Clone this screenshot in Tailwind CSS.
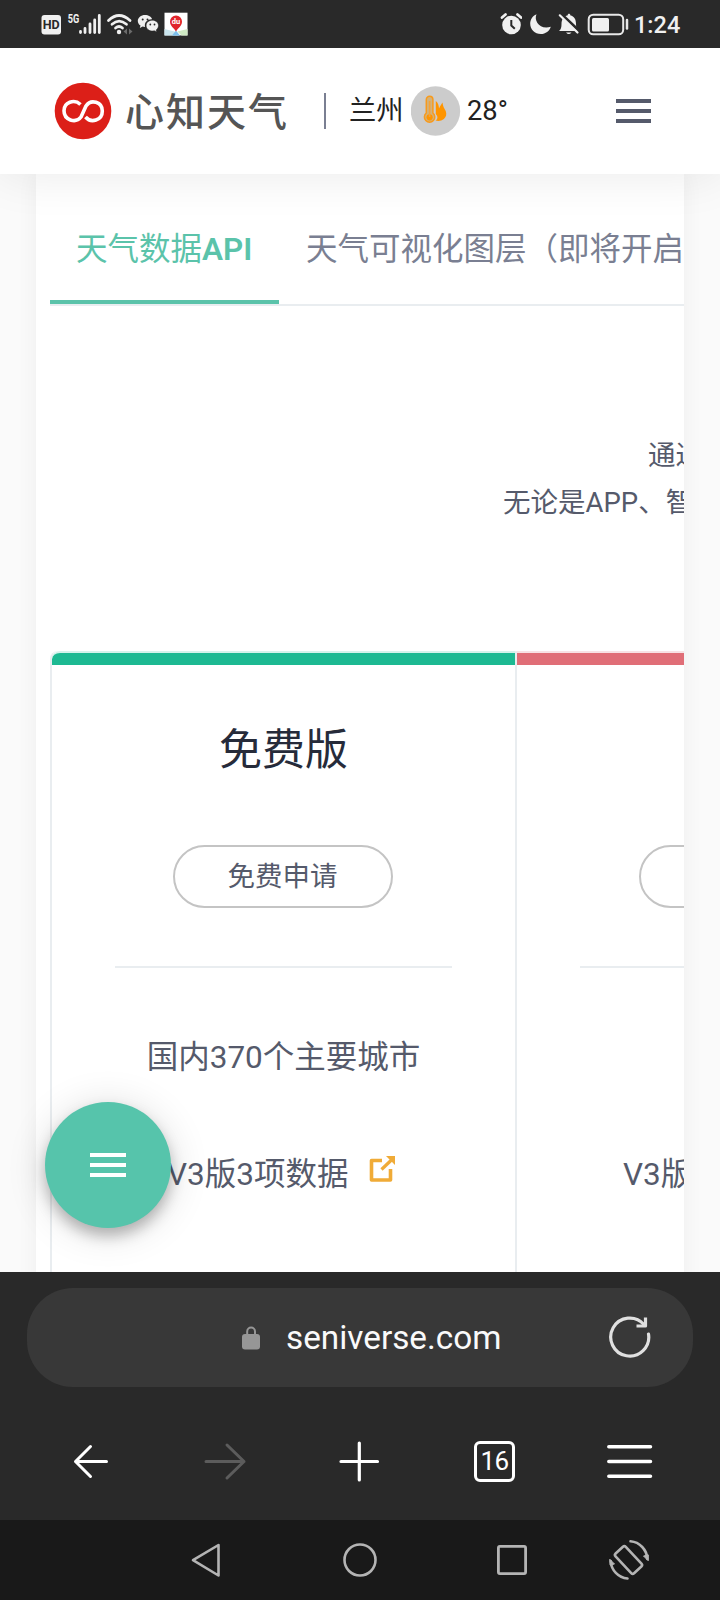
<!DOCTYPE html>
<html lang="zh-CN">
<head>
<meta charset="utf-8">
<title>心知天气</title>
<script src="https://cdn.jsdelivr.net/npm/@tailwindcss/browser@4"></script>
</head>
<body class="w-[720px] h-[1600px] overflow-hidden flex flex-col bg-[#fafafa] font-[Roboto,'Noto_Sans_CJK_SC',sans-serif] font-normal">

<!-- Status bar -->
<div class="h-12 shrink-0 bg-[#292929] flex items-start pl-[41px] pr-[41px] relative z-20">
  <svg class="mt-[14px] shrink-0" width="21" height="21" viewBox="0 0 21 21"><rect x="0.5" y="1" width="19.5" height="19.5" rx="3" fill="#f0f0f0"/><text x="10.2" y="15.2" font-size="12.5" font-weight="700" text-anchor="middle" textLength="17" lengthAdjust="spacingAndGlyphs" fill="#292929">HD</text></svg>
  <svg class="mt-[13px] ml-[5px] shrink-0" width="35" height="22" viewBox="67 13 35 22"><text x="67.7" y="22.6" font-size="12" font-weight="700" textLength="11.5" lengthAdjust="spacingAndGlyphs" fill="#f0f0f0">5G</text><g stroke="#f0f0f0" stroke-width="2.8" stroke-linecap="round"><path d="M80.5 31.500V32.500M85 28.500V32.500M90 24V32.500M94.700 20V32.500M99.300 15.500V32.500"/></g></svg>
  <svg class="mt-[13px] ml-[4px] shrink-0" width="28" height="22" viewBox="106 13 28 22"><g fill="none" stroke="#f0f0f0" stroke-width="2.700" stroke-linecap="round"><path d="M108.500 20.500Q119 10.500 130 20.500"/><path d="M112 24.300Q119 18 126.500 24.300"/><path d="M115.500 28Q119 25 122.500 28"/></g><circle cx="119" cy="32" r="2.200" fill="#f0f0f0"/><path d="M127 28.500v6l-3.500-3zM129 28.500v6l3.500-3z" fill="#6b6b6b"/></svg>
  <svg class="mt-[14px] ml-[3px] shrink-0" width="23" height="20" viewBox="137 14 23 20"><path d="M145 15c-4 0-7.200 2.700-7.200 6 0 1.900 1 3.500 2.700 4.600l-.7 2.400 2.800-1.400c.8.200 1.600.3 2.500.3-1.200-4.500 2.500-7.800 7-7.600C151.400 16.700 148.500 15 145 15z" fill="#f0f0f0"/><path d="M152.300 20.200c-3.500 0-6.200 2.400-6.200 5.400s2.700 5.500 6.200 5.500c.7 0 1.400-.1 2-.3l2.500 1.300-.6-2.100c1.400-1 2.300-2.600 2.300-4.400 0-3-2.800-5.400-6.200-5.400z" fill="#f0f0f0" stroke="#292929" stroke-width=".6"/><g fill="#292929"><circle cx="142.700" cy="19.500" r="1"/><circle cx="147.500" cy="19.500" r="1"/><circle cx="150.300" cy="24.500" r=".9"/><circle cx="154.500" cy="24.500" r=".9"/></g></svg>
  <svg class="mt-[12px] ml-[4px] shrink-0" width="24" height="24" viewBox="164 12 24 24"><rect x="164.500" y="12.700" width="23" height="22.700" fill="#fff"/><path d="M164.500 29l10 2.500 4.500 4h-14.500z" fill="#c9e5ee"/><path d="M187.500 29l-10 2.500 4 4h6z" fill="#cfe9c4"/><path d="M172 35.400l4-5 4 5z" fill="#7cc0ee"/><path d="M176 31.500c-2-3.800-6-5.300-6-10.100a6 6 0 0 1 12 0c0 4.800-4 6.300-6 10.100z" fill="#e0242b"/><text x="176" y="24.200" font-size="7.500" font-weight="700" text-anchor="middle" fill="#fff">du</text></svg>
  <div class="grow"></div>
  <svg class="mt-[13px] shrink-0" width="22" height="22" viewBox="501 13 22 22"><circle cx="512.500" cy="25" r="9.300" fill="#f0f0f0"/><path d="M512.300 20v5.500l3.500 3.200" fill="none" stroke="#292929" stroke-width="2"/><path d="M503 17.500l3.500-3M522 17.500l-3.500-3" stroke="#f0f0f0" stroke-width="2.700" stroke-linecap="round"/></svg>
  <svg class="mt-[13px] ml-[7px] shrink-0" width="23" height="22" viewBox="530 13 23 22"><path d="M537.500 14.200c-3 6.500 3.500 16 14.300 12.500-1.300 4.300-5.200 7.300-10 7.300-6 0-10.600-4.500-10.600-10.300 0-4.300 2.500-8 6.300-9.500z" fill="#f0f0f0"/></svg>
  <svg class="mt-[12px] ml-[6px] shrink-0" width="22" height="23" viewBox="559 12 22 23"><path d="M560 31c2-1.500 2.500-4 2.500-7 0-5 2.500-8 6-8.500.3-2.300 2.700-2.300 3 0 3.500.7 5.500 3.500 5.500 8.500 0 3 .5 5.500 2.500 7z" fill="#f0f0f0"/><path d="M567 32.500h5.500q-2.700 3-5.500 0z" fill="#f0f0f0"/><path d="M562 13.800l19 18" stroke="#292929" stroke-width="3"/><path d="M560.800 15.300l17.700 17.200" stroke="#f0f0f0" stroke-width="2.200" stroke-linecap="round"/></svg>
  <svg class="mt-[13px] ml-[7px] shrink-0" width="43" height="23" viewBox="587 13 43 23"><rect x="588.700" y="14.700" width="34.500" height="19.600" rx="4.500" fill="none" stroke="#e8e8e8" stroke-width="2"/><rect x="592" y="18" width="17" height="13.500" rx="1.500" fill="#f0f0f0"/><path d="M627 20v8.500" stroke="#e8e8e8" stroke-width="2.500" stroke-linecap="round"/></svg>
  <span class="ml-[4px] mt-[8px] w-[45px] text-[23.500px] leading-[34px] font-medium text-[#f0f0f0]">1:24</span>
</div>

<!-- Site header -->
<header class="h-[126px] shrink-0 bg-white flex items-center pl-[54px] pr-[68px] relative z-10 shadow-[0_0_50px_rgba(0,0,0,0.09)]">
  <svg class="shrink-0" width="58" height="58" viewBox="54 82 58 58"><circle cx="83" cy="111" r="28.300" fill="#dc1f18"/><path d="M80.500 104.500C74 98.500 64 102.500 64 110.800 64 120 75.500 124 81 117L86 106C91 98.500 102.300 102 102.300 111 102.300 120.500 91 123.500 85.500 117" fill="none" stroke="#fff" stroke-width="3.600" stroke-linecap="butt"/></svg>
  <span class="ml-[13px] mt-1 w-[164px] text-[39px] leading-[56px] tracking-[2px] font-medium text-[#555] whitespace-nowrap">心知天气</span>
  <div class="ml-[35px] w-0.5 h-9 bg-[#7a7f92]"></div>
  <span class="ml-[23px] w-[54px] text-[27.300px] leading-[40px] text-[#222] whitespace-nowrap">兰州</span>
  <svg class="ml-[8px] shrink-0" width="50" height="50" viewBox="411 86 50 50"><circle cx="435.500" cy="111" r="24.700" fill="#ccc"/><path d="M435.800 101c2.500 2 3 4.500 3.200 7.500 1-2.500 2.500-4.500 3.500-6 .3 3.500 1.800 6 3.200 8.500 1.200 3 .5 6-1.800 8-2.300 1.800-5.500 2.500-8.400 1.500 2.500-1.500 2.500-4 .3-6.500z" fill="#ff9500"/><path d="M426.300 99.500a3.300 3.300 0 0 1 6.600 0V113a5.200 5.200 0 1 1-6.600 0z" fill="#d3b27a" stroke="#f89a1c" stroke-width="1.500"/><circle cx="429.600" cy="117.300" r="3.100" fill="#ff9500"/><path d="M429.600 101v16" stroke="#f4a23a" stroke-width="1.600"/></svg>
  <span class="ml-[6px] text-[27.300px] leading-[40px] text-[#222]">28°</span>
  <div class="ml-auto w-[35px] mr-px flex flex-col gap-[6px]"><i class="h-1 bg-[#555a6b]"></i><i class="h-1 bg-[#555a6b]"></i><i class="h-1 bg-[#555a6b]"></i></div>
</header>

<!-- Page content -->
<main class="h-[1098px] shrink-0 overflow-hidden px-9 relative">
  <div class="w-[648px] h-[1200px] bg-white shadow-[0_0_20px_rgba(0,0,0,0.05)]">
   <div class="w-full h-full overflow-hidden pl-[14px]">
    <nav class="w-[900px] h-[132px] border-b-2 border-[#e9edf0] flex text-[31.500px] leading-[46px] whitespace-nowrap">
      <div class="w-[229px] h-[130px] shrink-0 border-b-4 border-[#5bc3aa] text-[#5bc3aa] pl-[26px] pt-[53px]">天气数据<span class="font-semibold">API</span></div>
      <div class="pl-[27px] pt-[53px] text-[#7a7f92]">天气可视化图层（即将开启）</div>
    </nav>
    <div class="w-[900px] h-[345px] pt-[126px] text-[27.500px] leading-[47px] text-[#555a6b] whitespace-nowrap">
      <p class="pl-[598px]">通过</p>
      <p class="pl-[453px]">无论是APP、智能</p>
    </div>
    <section class="w-[932px] h-[800px] flex border-l-2 border-[#e9edf0] rounded-tl-lg text-[#555a6b] text-center">
      <article class="w-[465px] shrink-0 border-r-2 border-[#e9edf0] flex flex-col items-center">
        <div class="w-full h-[14px] bg-[#1db992] border-t-2 border-[#d5f2eb] rounded-tl-lg"></div>
        <h2 class="mt-[53px] h-[62px] text-[43px] leading-[64px] text-[#262b3a]">免费版</h2>
        <div class="mt-[65px] mr-[2px] w-[220px] h-[63px] shrink-0 rounded-full border-2 border-[#c4c4c4] text-[27.500px] leading-[60px]">免费申请</div>
        <div class="mt-[58px] w-[337px] h-0.5 shrink-0 bg-[#e9edf0]"></div>
        <p class="mt-[67px] text-[31.500px] leading-[46px]">国内370个主要城市</p>
        <div class="mt-[71px] mr-[4px] w-[229px] flex whitespace-nowrap">
          <span class="text-[31.500px] leading-[46px]">V3版3项数据</span>
          <svg class="ml-auto mt-[3px] shrink-0" width="28" height="28" viewBox="369 1155 28 28"><g fill="none" stroke="#f0ab37" stroke-width="3.600"><path d="M383 1160.500H372.500V1180H391.500V1169" stroke-linejoin="round"/><path d="M382.500 1169.500L393.500 1159" stroke-width="3.200"/></g><path d="M387 1156h9v9z" fill="#f0ab37"/></svg>
        </div>
      </article>
      <article class="w-[465px] shrink-0 flex flex-col items-center">
        <div class="w-full h-[14px] bg-[#e06e77] border-t-2 border-[#f8e2e4]"></div>
        <div class="mt-[180px] w-[221px] h-[63px] shrink-0 rounded-full border-2 border-[#c4c4c4]"></div>
        <div class="mt-[58px] w-[339px] h-0.5 shrink-0 bg-[#e9edf0]"></div>
        <p class="mt-[184px] w-[253px] text-left text-[31.500px] leading-[46px] whitespace-nowrap">V3版14项数据</p>
      </article>
    </section>
   </div>
  </div>
  <!-- Floating menu button -->
  <button class="absolute left-[45px] top-[928px] w-[126px] h-[126px] rounded-full bg-[#56c4ab] flex items-center justify-center shadow-[0_8px_14px_rgba(0,0,0,0.25),0_4px_40px_rgba(0,0,0,0.14)]">
    <span class="w-9 mr-px flex flex-col gap-[6px]"><i class="h-1 bg-white"></i><i class="h-1 bg-white"></i><i class="h-1 bg-white"></i></span>
  </button>
</main>

<!-- Browser toolbar -->
<footer class="h-[248px] shrink-0 bg-[#292929] relative pt-4">
  <div class="mx-[27px] h-[99px] rounded-[46px] bg-[#383838] flex items-center pl-[214px] pr-[42px]">
    <svg class="shrink-0 mt-[2px]" width="20" height="26" viewBox="241 1326 20 26"><rect x="242" y="1334" width="18" height="15.500" rx="3" fill="#969696"/><path d="M247.200 1335v-3.500a3.900 3.900 0 0 1 7.800 0v3.500" fill="none" stroke="#969696" stroke-width="2"/></svg>
    <span class="ml-[25px] text-[33.300px] leading-[44px] text-[#fafafa]">seniverse.com</span>
    <svg class="ml-auto mb-[2px] shrink-0" width="44" height="44" viewBox="608 1315 44 44"><g fill="none" stroke="#e0e0e0" stroke-width="3.200"><path d="M649.500 1334A19 19 0 1 1 645 1324.500" stroke-linecap="round"/><path d="M646.500 1317.500v8.500H637.500" stroke-linejoin="round"/></g></svg>
  </div>
  <div class="h-[132px] pt-4 pl-[73px] pr-[67px] flex items-center">
    <svg class="shrink-0" width="36" height="40" viewBox="73 1441 36 40" fill="none" stroke="#fff" stroke-width="3" stroke-linecap="round" stroke-linejoin="round"><path d="M106.500 1461.500H75.500M90.500 1446.500L75.500 1461.500L90.500 1476.500"/></svg>
    <svg class="ml-[94px] shrink-0" width="44" height="40" viewBox="203 1441 44 40" fill="none" stroke="#5c5c5c" stroke-width="3" stroke-linecap="round" stroke-linejoin="round"><path d="M206 1461.500H244M227 1445L244 1461.500L227 1478"/></svg>
    <svg class="ml-[91px] shrink-0" width="42" height="42" viewBox="338 1440 42 42" fill="none" stroke="#fff" stroke-width="3.200" stroke-linecap="round"><path d="M341 1461.500H377.500M359.300 1443V1480"/></svg>
    <div class="ml-[94px] shrink-0 w-[41px] h-[41px] border-[3px] border-white rounded-md text-white text-[26px] leading-[35px] flex justify-center tracking-[-0.500px]">16</div>
    <svg class="ml-auto shrink-0" width="46" height="36" viewBox="607 1443 46 36" fill="none" stroke="#fff" stroke-width="3.500" stroke-linecap="round"><path d="M608.800 1446.800H650.500M608.800 1461.500H650.500M608.800 1476.200H650.500"/></svg>
  </div>
</footer>

<!-- System navigation -->
<div class="h-20 shrink-0 bg-[#191919] flex items-center pl-[190px]">
  <svg width="32" height="38" viewBox="190 1541 32 38" fill="none" stroke="#b4b4b4" stroke-width="2.600" stroke-linejoin="round"><path d="M218.500 1545V1575.500L193 1560.200z"/></svg>
  <svg class="ml-[120px]" width="36" height="36" viewBox="342 1542 36 36" fill="none" stroke="#b4b4b4" stroke-width="2.600"><circle cx="360" cy="1560" r="15.500"/></svg>
  <svg class="ml-[118px]" width="32" height="32" viewBox="496 1544 32 32" fill="none" stroke="#b4b4b4" stroke-width="2.800"><rect x="498.400" y="1546.400" width="27.200" height="27.200" rx="1.500"/></svg>
  <svg class="ml-[79px]" width="44" height="44" viewBox="607 1538 44 44" fill="none" stroke="#b4b4b4" stroke-width="2.600" stroke-linecap="round"><rect x="621.500" y="1546.500" width="14" height="27" rx="2" transform="rotate(-43 628.500 1560)"/><path d="M630.500 1541.300A18.500 18.500 0 0 1 647.300 1559"/><path d="M627.500 1578.500A18.500 18.500 0 0 1 610.700 1561"/><path d="M648 1560.500l-4.500-4.500 4.500-1zM610 1559.500l4.500 4.500-4 1z" fill="#b4b4b4" stroke-width="1"/></svg>
</div>
</body>
</html>
